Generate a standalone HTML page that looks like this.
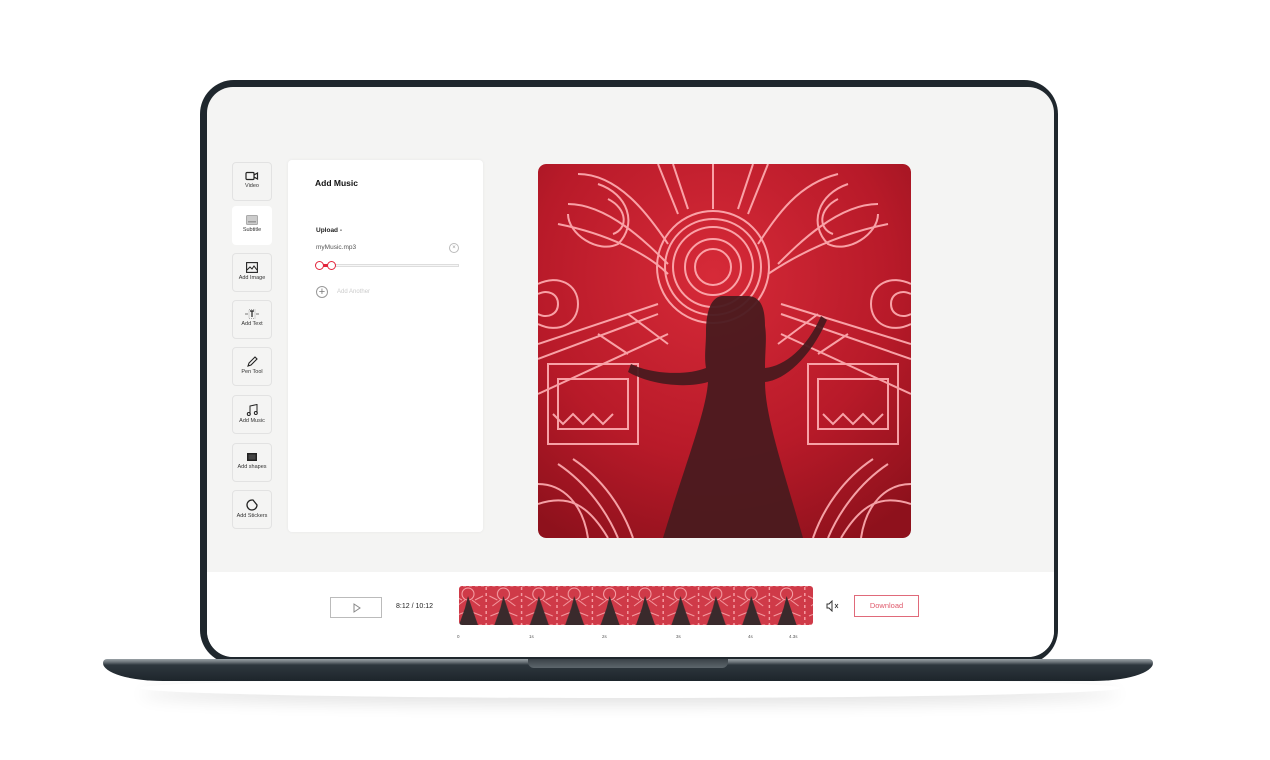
<!DOCTYPE html>
<html><head><meta charset="utf-8"><style>
*{margin:0;padding:0;box-sizing:border-box}
body{width:1270px;height:760px;background:#fff;position:relative;overflow:hidden;font-family:"Liberation Sans",sans-serif}
.abs{position:absolute}
.frame{left:200px;top:80px;width:858px;height:584px;background:#1f272d;border-radius:34px}
.screen{left:207px;top:87px;width:847px;height:570px;background:#f4f4f3;border-radius:26px;overflow:hidden}
.bar{left:0;top:485px;width:847px;height:85px;background:#fff}
.base{left:103px;top:659px;width:1050px;height:22px;background:linear-gradient(#9aa1a6 0,#6c747a 3px,#2e373e 6px,#1d252b 100%);border-radius:4px 4px 60px 60px/4px 4px 18px 18px}
.notch{left:528px;top:659px;width:200px;height:9px;background:linear-gradient(#3a4248,#5d666c);border-radius:0 0 6px 6px}
.shadow{left:140px;top:678px;width:980px;height:20px;border-radius:50%;box-shadow:0 6px 16px rgba(0,0,0,.12)}
.tool{left:232px;width:40px;height:39px;border:1px solid #e2e2e2;border-radius:4px;background:#f4f4f3;text-align:center;font-size:5.5px;color:#333}
.tool svg{display:block;margin:8px auto 2px}
.tool.act{background:#fff;border-color:#fff}
.panel{left:288px;top:160px;width:195px;height:372px;background:#fff;border-radius:4px;box-shadow:0 0 3px rgba(0,0,0,.06)}
</style></head><body>
<div class="abs shadow"></div>
<div class="abs frame"></div>
<div class="abs screen"><div class="abs bar"></div></div>
<div class="abs base"></div>
<div class="abs notch"></div>

<div class="abs tool" style="top:162px"><svg width="14" height="10" viewBox="0 0 14 10"><rect x="1" y="1.5" width="8" height="7" rx="1" fill="none" stroke="#222" stroke-width="1.2"/><path d="M9 4l3.5-2v6L9 6" fill="none" stroke="#222" stroke-width="1.2"/></svg>Video</div>
<div class="abs tool act" style="top:206px"><svg width="12" height="10" viewBox="0 0 12 10"><rect x="0.5" y="0.5" width="11" height="9" rx="1" fill="#ccc" stroke="#aaa"/><rect x="2" y="6" width="8" height="1.5" fill="#999"/></svg>Subtitle</div>
<div class="abs tool" style="top:253px"><svg width="12" height="11" viewBox="0 0 12 11"><rect x="0.6" y="0.6" width="10.8" height="9.8" fill="none" stroke="#222" stroke-width="1.1"/><path d="M1 8l3-3 2 2 2-3 3 4" fill="none" stroke="#222"/></svg>Add Image</div>
<div class="abs tool" style="top:300px"><svg width="14" height="10" viewBox="0 0 14 10"><rect x="4" y="0.5" width="6" height="9" fill="none" stroke="#aaa" stroke-dasharray="1 1"/><path d="M5 2h4M7 2v6" stroke="#222" stroke-width="1.2"/><path d="M0 5h3M11 5h3" stroke="#777"/></svg>Add Text</div>
<div class="abs tool" style="top:347px"><svg width="12" height="11" viewBox="0 0 12 11"><path d="M2 10l1-3 6-6 2 2-6 6z" fill="none" stroke="#222" stroke-width="1.1"/></svg>Pen Tool</div>
<div class="abs tool" style="top:395px"><svg width="12" height="12" viewBox="0 0 12 12"><path d="M4 10V2l7-1.5V9" fill="none" stroke="#222"/><circle cx="2.8" cy="10" r="1.5" fill="none" stroke="#222"/><circle cx="9.8" cy="9" r="1.5" fill="none" stroke="#222"/></svg>Add Music</div>
<div class="abs tool" style="top:443px"><svg width="12" height="10" viewBox="0 0 12 10"><rect x="1" y="1" width="10" height="8" fill="#222"/><rect x="2.5" y="2.5" width="7" height="5" fill="#444"/></svg>Add shapes</div>
<div class="abs tool" style="top:490px"><svg width="12" height="12" viewBox="0 0 12 12"><path d="M6 1a5 5 0 1 0 5 5L7 1z" fill="none" stroke="#222" stroke-width="1.3"/></svg>Add Stickers</div>

<div class="abs panel">
 <div class="abs" style="left:27px;top:18px;font-size:8.5px;font-weight:bold;color:#111">Add Music</div>
 <div class="abs" style="left:28px;top:67px;font-size:6.5px;font-weight:bold;color:#222">Upload -</div>
 <div class="abs" style="left:28px;top:84px;font-size:6.5px;color:#555">myMusic.mp3</div>
 <div class="abs" style="left:161px;top:83px;width:10px;height:10px;border:1px solid #bbb;border-radius:50%;font-size:6px;color:#999;text-align:center;line-height:8px">×</div>
 <div class="abs" style="left:30px;top:104px;width:141px;height:3px;border:1px solid #ddd;background:#f6f6f6"></div>
 <div class="abs" style="left:33px;top:104px;width:10px;height:3px;background:#e3243b"></div>
 <div class="abs" style="left:27px;top:101px;width:9px;height:9px;border:1.3px solid #e3243b;border-radius:50%;background:#fff"></div>
 <div class="abs" style="left:39px;top:101px;width:9px;height:9px;border:1.3px solid #e3243b;border-radius:50%;background:#fff"></div>
 <div class="abs" style="left:28px;top:126px;width:12px;height:12px;border:1px solid #999;border-radius:50%;font-size:11px;line-height:10px;text-align:center;color:#777">+</div>
 <div class="abs" style="left:49px;top:129px;font-size:6px;color:#ccc">Add Another</div>
</div>

<svg class="abs" style="left:538px;top:164px;border-radius:8px" width="373" height="374" viewBox="0 0 373 374">
 <defs><clipPath id="c"><rect width="373" height="374" rx="8"/></clipPath>
 <radialGradient id="g" cx="0.47" cy="0.3" r="0.8"><stop offset="0" stop-color="#d62a38"/><stop offset=".6" stop-color="#b81a29"/><stop offset="1" stop-color="#8e111c"/></radialGradient></defs>
 <g clip-path="url(#c)">
 <rect width="373" height="374" fill="url(#g)"/>
 <g fill="none" stroke="#ffb0b4" stroke-width="2" opacity=".9">
  <circle cx="175" cy="103" r="56"/><circle cx="175" cy="103" r="48"/><circle cx="175" cy="103" r="40"/><circle cx="175" cy="103" r="28"/><circle cx="175" cy="103" r="18"/>
  <path d="M40 10c40 0 70 40 90 70M20 60c50 10 90 30 110 50M30 40c40 0 80 40 100 60M300 10c-40 10-60 40-80 70M350 60c-50 10-90 30-120 50M340 40c-40 0-80 40-100 60"/>
  <path d="M0 180l120-40M0 195l120-45M0 230l130-60M373 180l-130-40M373 195l-130-45M373 230l-130-60"/>
  <path d="M10 200h90v80H10zM20 215h70v50H20zM270 200h90v80h-90zM280 215h70v50h-70zM15 250l10 10 10-10 10 10 10-10 10 10 10-10M285 250l10 10 10-10 10 10 10-10 10 10 10-10"/>
  <path d="M20 300c30 20 50 50 60 74M35 295c30 20 50 50 60 79M350 300c-30 20-50 50-60 74M335 295c-30 20-50 50-60 79M0 340c30-10 50 0 70 34M373 340c-30-10-50 0-70 34M0 320c25 0 45 20 50 54M373 320c-25 0-45 20-50 54"/>
  <path d="M60 20c30 10 40 40 20 60-20 10-50-10-50-30M70 35c20 10 20 30 5 35M310 20c-30 10-40 40-20 60 20 10 50-10 50-30M300 35c-20 10-20 30-5 35"/>
  <path d="M120 0l20 50M135 0l15 45M175 0v45M215 0l-15 45M230 0l-20 50"/>
  <path d="M0 120c20-10 40 0 40 20s-20 30-40 20M0 130c10-5 20 0 20 10s-10 15-20 10M373 120c-20-10-40 0-40 20s20 30 40 20M373 130c-10-5-20 0-20 10s10 15 20 10"/>
  <path d="M90 150l40 30M280 150l-40 30M60 170l30 20M310 170l-30 20"/>
 </g>
 <path d="M185 132c-12 0-17 16-17 36 0 14-2 24 0 36-20 8-55 6-75 -4l-3 8c25 14 60 16 80 10-2 30-22 80-45 156h140c-20-70-38-122-38-156 20-2 45-24 62-62l-6-4c-14 32-36 50-56 52 0-18 2-30 0-42 0-18-4-30-18-30z" fill="#4a1a1f" opacity=".95"/>
 </g>
</svg>

<div class="abs" style="left:330px;top:597px;width:52px;height:21px;border:1px solid #bbb"><svg class="abs" style="left:22px;top:5px" width="8" height="10" viewBox="0 0 8 10"><path d="M1 1l6 4-6 4z" fill="none" stroke="#888"/></svg></div>
<div class="abs" style="left:396px;top:603px;font-size:7px;color:#222">8:12 / 10:12</div>
<svg class="abs" style="left:459px;top:586px;border-radius:3px" width="354" height="39" viewBox="0 0 354 39">
 <defs><pattern id="p" x="-8" width="35.4" height="39" patternUnits="userSpaceOnUse">
  <rect width="35.4" height="39" fill="#cf3a48"/>
  <path d="M0 0h35v39H0z" fill="none" stroke="#f7a0a5" stroke-width="1" stroke-dasharray="3 3"/>
  <circle cx="17" cy="8" r="6" fill="none" stroke="#f8a4aa"/>
  <path d="M6 20l8-6M29 20l-8-6M4 30l10-4M31 30l-10-4M3 10l8 4M32 10l-8 4" stroke="#f59aa0"/>
  <path d="M17 10l-3 12-6 17h19l-6-17z" fill="#3a2a2c"/>
 </pattern></defs>
 <rect width="354" height="39" fill="url(#p)"/>
</svg>
<div class="abs" style="top:634px;font-size:4.5px;color:#555;left:457px">0</div>
<div class="abs" style="top:634px;font-size:4.5px;color:#555;left:529px">1s</div>
<div class="abs" style="top:634px;font-size:4.5px;color:#555;left:602px">2s</div>
<div class="abs" style="top:634px;font-size:4.5px;color:#555;left:676px">3s</div>
<div class="abs" style="top:634px;font-size:4.5px;color:#555;left:748px">4s</div>
<div class="abs" style="top:634px;font-size:4.5px;color:#555;left:789px">4.3s</div>
<svg class="abs" style="left:826px;top:600px" width="13" height="12" viewBox="0 0 13 12"><path d="M1 4h2l3-3v10L3 8H1z" fill="none" stroke="#333"/><path d="M9 4l3 4M12 4l-3 4" stroke="#333" stroke-width=".8"/></svg>
<div class="abs" style="left:854px;top:595px;width:65px;height:22px;border:1px solid #e06a7a;color:#e05a6c;font-size:7.5px;text-align:center;line-height:20px">Download</div>
</body></html>
